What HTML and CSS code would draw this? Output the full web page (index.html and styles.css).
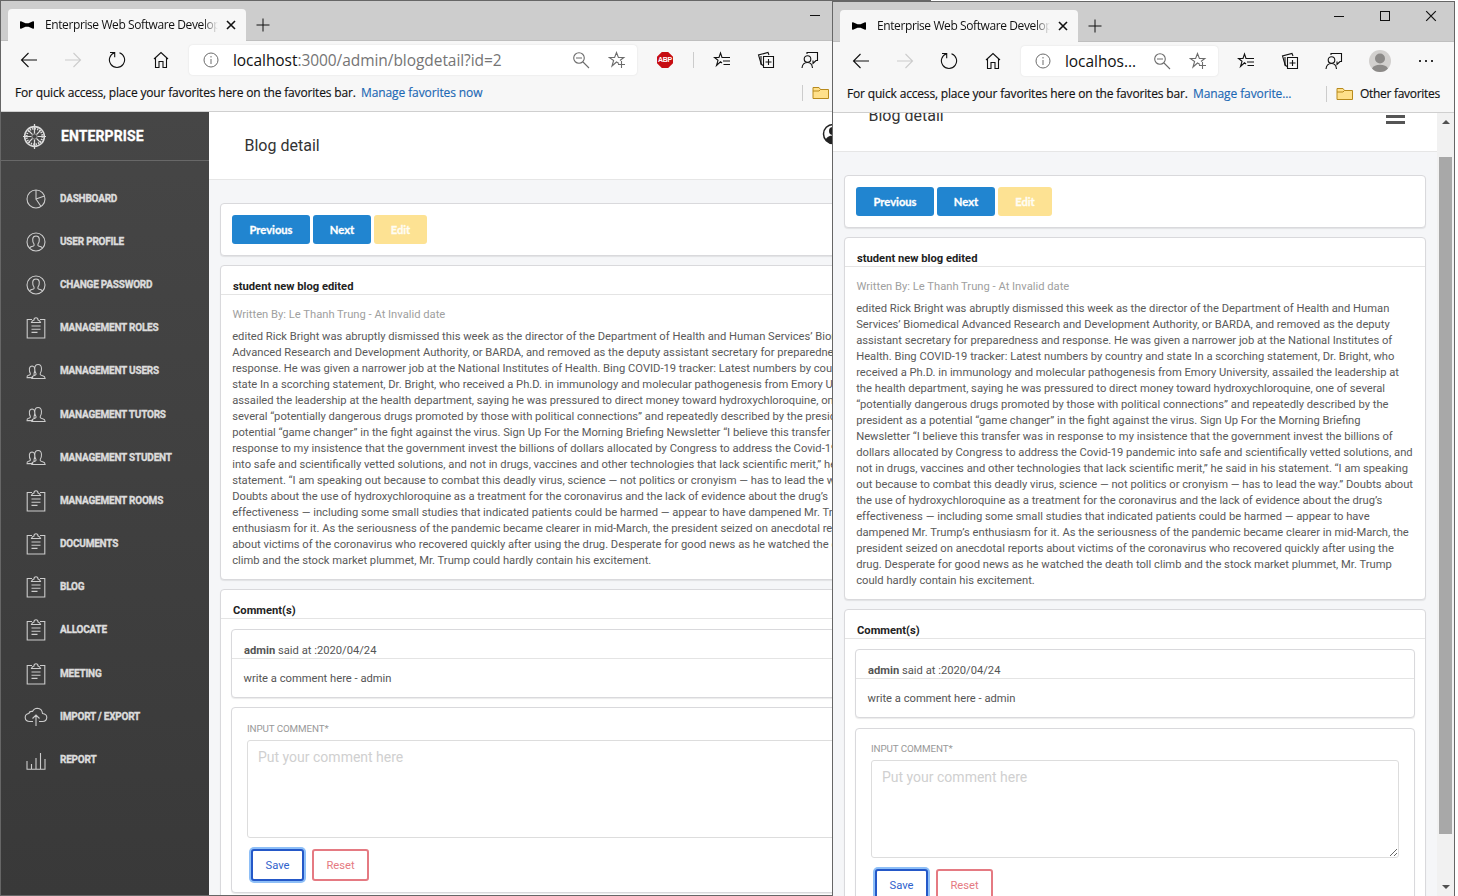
FILE: index.html
```html
<!DOCTYPE html>
<html lang="en">
<head>
<meta charset="utf-8">
<title>Enterprise Web Software Development</title>
<link rel="stylesheet" href="styles.css">
</head>
<body>
<svg class="defs" width="0" height="0">
  <symbol id="bow" viewBox="0 0 14 8"><path d="M0 1Q0 0 1 .3L5.5 2.2H8.500L13 .3Q14 0 14 1V7Q14 8 13 7.700L8.500 5.800H5.500L1 7.700Q0 8 0 7Z" fill="#000"/></symbol>
  <symbol id="x" viewBox="0 0 10 10"><path d="M1 1L9 9M9 1L1 9"/></symbol>
  <symbol id="plus" viewBox="0 0 14 14"><path d="M7 .5V13.500M.5 7H13.500"/></symbol>
  <symbol id="back" viewBox="0 0 18 18"><path d="M17 9H1.500M8.500 2L1.500 9L8.500 16"/></symbol>
  <symbol id="fwd" viewBox="0 0 18 18"><path d="M1 9H16.500M9.500 2L16.500 9L9.500 16"/></symbol>
  <symbol id="reload" viewBox="0 0 18 18"><path d="M6.500 1.700A7.600 7.600 0 1 0 11.500 1.700M2 1.500H6.700V6.200"/></symbol>
  <symbol id="home" viewBox="0 0 18 18"><path d="M2 8L9 1.500L16 8M3.500 7V16.500H7V10.500H11V16.500H14.500V7"/></symbol>
  <symbol id="info" viewBox="0 0 16 16"><circle cx="8" cy="8" r="7"/><path d="M8 7V12M8 4V5.500"/></symbol>
  <symbol id="zoomout" viewBox="0 0 18 18"><circle cx="7" cy="7" r="5.300"/><path d="M4 7H10M11 11L17 17"/></symbol>
  <symbol id="star" viewBox="0 0 18 18"><path d="M11 12.500L8.500 11L4 15L5.600 9.500L1.200 6.500H6.600L8.500 1.500L10.400 6.500H15.800L12 9.500M13.500 10V17M10 13.500H17"/></symbol>
  <symbol id="favs" viewBox="0 0 18 18"><path d="M9 12L7.500 10.800L3.500 14.500L5 9.300L1.500 6.500H6L7.500 2L9 6.500H17M10 10H17M10.500 13.500H17"/></symbol>
  <symbol id="coll" viewBox="0 0 18 18"><path d="M6.500 5.500H16.500V16.500H6.500ZM11.500 8V14M8.500 11H14.500M4.500 14L1.500 4L11 1.500L12 4"/><path d="M4 5V13L6 14.500"/></symbol>
  <symbol id="feed" viewBox="0 0 18 18"><circle cx="6.500" cy="8" r="3.300"/><path d="M1 17Q1.500 11.500 6.500 11.500Q11 11.500 11.500 17M6 3V1.500H16.500V9.500H15L12 12.500V9.500"/></symbol>
  <symbol id="folder" viewBox="0 0 18 14"><path d="M1 12.500V1.500H7L8.500 3.500H16.500V12.500Z" fill="#ffe08a" stroke="#b88a1c"/><path d="M1 5H7L8.500 3.500" stroke="#b88a1c"/></symbol>
  <symbol id="pie" viewBox="0 0 20 20"><circle cx="10" cy="10" r="9"/><path d="M10 1V10L18.500 7M10 10L15 17.500"/></symbol>
  <symbol id="user" viewBox="0 0 20 20"><circle cx="10" cy="10" r="9"/><path d="M3.500 16Q4.500 14.500 7.500 14Q8.500 13.500 8 12Q6.500 10 6.700 7Q7 4 10 4Q13 4 13.300 7Q13.500 10 12 12Q11.500 13.500 12.500 14Q15.500 14.500 16.500 16"/></symbol>
  <symbol id="clip" viewBox="0 0 20 22"><path d="M6 2.500H1.200V21H18.800V2.500H14M5.500 5.500Q6 3.500 8 3Q8 .8 10 .8Q12 .8 12 3Q14 3.500 14.500 5.500ZM5.500 9H14.500M5.500 12.200H14.500M5.500 15.400H11.500"/></symbol>
  <symbol id="users" viewBox="0 0 22 18"><path d="M8 15.500H1.500Q1.200 13.300 3 13Q5.500 12.500 5 11Q3.800 9 4 6Q4.500 3.200 7 3.200Q8.500 3.300 9.200 4.500Q10.500 8 9 11Q8.500 12.500 9.500 13M6.500 16.500Q6.500 14 8.500 13.500Q11.500 13 11 11.200Q9.500 9 9.700 5.500Q10 1.500 13.200 1.500Q16.500 1.500 16.800 5.500Q17 9 15.500 11.200Q15 13 18 13.500Q20.500 14 20.700 16.500Z"/></symbol>
  <symbol id="cloud" viewBox="0 0 24 20"><path d="M9 14.500H6Q1.200 14.500 1.200 10.500Q1.200 7 4.800 6.500Q5.500 4 8.500 4.500Q10 1.200 13.300 1.200Q18 1.500 18.500 6.500Q22.800 7 22.800 10.500Q22.500 14.500 18.500 14.500H15M12 19V8.500M8.500 11.500L12 8L15.500 11.500"/></symbol>
  <symbol id="chart" viewBox="0 0 20 18"><path d="M1 9V17.200H19V7M5.500 17V12M10 17V6M14.500 17V1"/></symbol>
  <symbol id="compass" viewBox="0 0 24 26"><circle cx="12" cy="13" r="10.300" stroke-width="1.600"/><circle cx="12" cy="13" r="8.200" stroke-width="2" stroke-dasharray="1.300 1.270"/><path d="M12 0V10M12 16V26M0 13H9M15 13H24M5.500 6.500L10 11M14 15L18.500 19.500M18.500 6.500L14 11M10 15L5.500 19.500" stroke-width="1.300"/><circle cx="12" cy="13" r="2.700" stroke="#999"/></symbol>
</svg>

<section class="window window--rear">
  <div class="tabstrip">
    <div class="tab"><svg class="tab-icon"><use href="#bow"/></svg><span class="tab-title">Enterprise Web Software Develop</span><svg class="tab-close"><use href="#x"/></svg></div>
    <svg class="tab-new"><use href="#plus"/></svg>
    <div class="captions"><span><i class="cap-min"></i></span><span></span><span></span></div>
  </div>
  <div class="toolbar">
    <div class="nav"><span><svg class="i18"><use href="#back"/></svg></span><span class="dim"><svg class="i18"><use href="#fwd"/></svg></span><span><svg class="i18"><use href="#reload"/></svg></span><span><svg class="i18"><use href="#home"/></svg></span></div>
    <div class="address"><svg class="i16"><use href="#info"/></svg><span class="url"><b>localhost</b>:3000/admin/blogdetail?id=2</span><svg class="i18 zoomout"><use href="#zoomout"/></svg><svg class="i18"><use href="#star"/></svg></div>
    <div class="extension"><span class="abp">ABP</span><i class="sep"></i></div>
    <div class="actions"><svg class="i18"><use href="#favs"/></svg><svg class="i18"><use href="#coll"/></svg><svg class="i18"><use href="#feed"/></svg></div>
  </div>
  <div class="favbar"><span class="fav-text">For quick access, place your favorites here on the favorites bar.</span><a class="fav-link">Manage favorites now</a><div class="other"><i class="sep"></i><svg class="folder"><use href="#folder"/></svg></div></div>
  <div class="viewport">
    <aside class="sidebar">
      <div class="brand"><svg class="logo"><use href="#compass"/></svg>ENTERPRISE</div>
      <nav class="menu">
        <a><svg><use href="#pie"/></svg><span>DASHBOARD</span></a>
        <a><svg><use href="#user"/></svg><span>USER PROFILE</span></a>
        <a><svg><use href="#user"/></svg><span>CHANGE PASSWORD</span></a>
        <a><svg class="tall"><use href="#clip"/></svg><span>MANAGEMENT ROLES</span></a>
        <a><svg class="people"><use href="#users"/></svg><span>MANAGEMENT USERS</span></a>
        <a><svg class="people"><use href="#users"/></svg><span>MANAGEMENT TUTORS</span></a>
        <a><svg class="people"><use href="#users"/></svg><span>MANAGEMENT STUDENT</span></a>
        <a><svg class="tall"><use href="#clip"/></svg><span>MANAGEMENT ROOMS</span></a>
        <a><svg class="tall"><use href="#clip"/></svg><span>DOCUMENTS</span></a>
        <a><svg class="tall"><use href="#clip"/></svg><span>BLOG</span></a>
        <a><svg class="tall"><use href="#clip"/></svg><span>ALLOCATE</span></a>
        <a><svg class="tall"><use href="#clip"/></svg><span>MEETING</span></a>
        <a><svg><use href="#cloud"/></svg><span>IMPORT / EXPORT</span></a>
        <a><svg class="low"><use href="#chart"/></svg><span>REPORT</span></a>
      </nav>
    </aside>
    <main class="main">
      <header class="page-head"><h1>Blog detail</h1><svg class="account" viewBox="0 0 22 22"><circle cx="11" cy="11" r="9.500" fill="#fff" stroke="#222" stroke-width="1.500"/><circle cx="11" cy="8" r="4" fill="#222"/><path d="M3.500 17Q5 12.500 11 12.500Q17 12.500 18.500 17Q15 20.500 11 20.500Q7 20.500 3.500 17Z" fill="#222"/></svg></header>
      <div class="content">
        <div class="card pager"><button class="btn prev">Previous</button><button class="btn next">Next</button><button class="btn edit">Edit</button></div>
        <article class="card post">
          <h2>student new blog edited</h2>
          <p class="byline">Written By: Le Thanh Trung - At Invalid date</p>
          <p class="text">edited Rick Bright was abruptly dismissed this week as the director of the Department of Health and Human Services’ Biomedical<br>Advanced Research and Development Authority, or BARDA, and removed as the deputy assistant secretary for preparedness and<br>response. He was given a narrower job at the National Institutes of Health. Bing COVID-19 tracker: Latest numbers by country and<br>state In a scorching statement, Dr. Bright, who received a Ph.D. in immunology and molecular pathogenesis from Emory University,<br>assailed the leadership at the health department, saying he was pressured to direct money toward hydroxychloroquine, one of<br>several “potentially dangerous drugs promoted by those with political connections” and repeatedly described by the president as a<br>potential “game changer” in the fight against the virus. Sign Up For the Morning Briefing Newsletter “I believe this transfer was in<br>response to my insistence that the government invest the billions of dollars allocated by Congress to address the Covid-19 pandemic<br>into safe and scientifically vetted solutions, and not in drugs, vaccines and other technologies that lack scientific merit,” he said in his<br>statement. “I am speaking out because to combat this deadly virus, science — not politics or cronyism — has to lead the way.”<br>Doubts about the use of hydroxychloroquine as a treatment for the coronavirus and the lack of evidence about the drug’s<br>effectiveness — including some small studies that indicated patients could be harmed — appear to have dampened Mr. Trump’s<br>enthusiasm for it. As the seriousness of the pandemic became clearer in mid-March, the president seized on anecdotal reports<br>about victims of the coronavirus who recovered quickly after using the drug. Desperate for good news as he watched the death toll<br>climb and the stock market plummet, Mr. Trump could hardly contain his excitement.</p>
        </article>
        <section class="card comments">
          <h2>Comment(s)</h2>
          <div class="card comment"><h3><b>admin</b> said at :2020/04/24</h3><p>write a comment here - admin</p></div>
          <form class="card form"><label>INPUT COMMENT*</label><textarea placeholder="Put your comment here"></textarea><div class="buttons"><button type="button" class="save">Save</button><button type="button" class="reset">Reset</button></div></form>
        </section>
      </div>
    </main>
  </div>
</section>

<section class="window window--front">
  <div class="tabstrip">
    <div class="tab"><svg class="tab-icon"><use href="#bow"/></svg><span class="tab-title">Enterprise Web Software Develop</span><svg class="tab-close"><use href="#x"/></svg></div>
    <svg class="tab-new"><use href="#plus"/></svg>
    <div class="captions"><span><i class="cap-min"></i></span><span><i class="cap-max"></i></span><span><svg class="cap-x"><use href="#x"/></svg></span></div>
  </div>
  <div class="toolbar">
    <div class="nav"><span><svg class="i18"><use href="#back"/></svg></span><span class="dim"><svg class="i18"><use href="#fwd"/></svg></span><span><svg class="i18"><use href="#reload"/></svg></span><span><svg class="i18"><use href="#home"/></svg></span></div>
    <div class="address"><svg class="i16"><use href="#info"/></svg><span class="url"><b>localhos...</b></span><svg class="i18 zoomout"><use href="#zoomout"/></svg><svg class="i18"><use href="#star"/></svg></div>
    <div class="actions"><svg class="i18"><use href="#favs"/></svg><svg class="i18"><use href="#coll"/></svg><svg class="i18"><use href="#feed"/></svg><svg class="profile" viewBox="0 0 22 22"><circle cx="11" cy="11" r="11" fill="#d2d0ce"/><circle cx="11" cy="8.500" r="5" fill="#8c8a88"/><path d="M3 18.500Q5 14.800 11 14.800Q17 14.800 19 18.500Q16 22 11 22Q6 22 3 18.500Z" fill="#8c8a88"/></svg><span class="dots"><i></i><i></i><i></i></span></div>
  </div>
  <div class="favbar"><span class="fav-text">For quick access, place your favorites here on the favorites bar.</span><a class="fav-link">Manage favorite...</a><div class="other"><i class="sep"></i><svg class="folder"><use href="#folder"/></svg><span class="other-text">Other favorites</span></div></div>
  <div class="viewport">
    <main class="main scrolled">
      <header class="page-head"><h1>Blog detail</h1><span class="burger"><i></i><i></i><i></i></span></header>
      <div class="content">
        <div class="card pager"><button class="btn prev">Previous</button><button class="btn next">Next</button><button class="btn edit">Edit</button></div>
        <article class="card post">
          <h2>student new blog edited</h2>
          <p class="byline">Written By: Le Thanh Trung - At Invalid date</p>
          <p class="text">edited Rick Bright was abruptly dismissed this week as the director of the Department of Health and Human<br>Services’ Biomedical Advanced Research and Development Authority, or BARDA, and removed as the deputy<br>assistant secretary for preparedness and response. He was given a narrower job at the National Institutes of<br>Health. Bing COVID-19 tracker: Latest numbers by country and state In a scorching statement, Dr. Bright, who<br>received a Ph.D. in immunology and molecular pathogenesis from Emory University, assailed the leadership at<br>the health department, saying he was pressured to direct money toward hydroxychloroquine, one of several<br>“potentially dangerous drugs promoted by those with political connections” and repeatedly described by the<br>president as a potential “game changer” in the fight against the virus. Sign Up For the Morning Briefing<br>Newsletter “I believe this transfer was in response to my insistence that the government invest the billions of<br>dollars allocated by Congress to address the Covid-19 pandemic into safe and scientifically vetted solutions, and<br>not in drugs, vaccines and other technologies that lack scientific merit,” he said in his statement. “I am speaking<br>out because to combat this deadly virus, science — not politics or cronyism — has to lead the way.” Doubts about<br>the use of hydroxychloroquine as a treatment for the coronavirus and the lack of evidence about the drug’s<br>effectiveness — including some small studies that indicated patients could be harmed — appear to have<br>dampened Mr. Trump’s enthusiasm for it. As the seriousness of the pandemic became clearer in mid-March, the<br>president seized on anecdotal reports about victims of the coronavirus who recovered quickly after using the<br>drug. Desperate for good news as he watched the death toll climb and the stock market plummet, Mr. Trump<br>could hardly contain his excitement.</p>
        </article>
        <section class="card comments">
          <h2>Comment(s)</h2>
          <div class="card comment"><h3><b>admin</b> said at :2020/04/24</h3><p>write a comment here - admin</p></div>
          <form class="card form"><label>INPUT COMMENT*</label><textarea placeholder="Put your comment here"></textarea><div class="buttons"><button type="button" class="save">Save</button><button type="button" class="reset">Reset</button></div></form>
        </section>
      </div>
    </main>
    <div class="scrollbar"><i class="up"></i><div class="thumb"></div><i class="down"></i></div>
  </div>
</section>
</body>
</html>
```
FILE: styles.css
```css
* { box-sizing: border-box; }
body { margin: 0; height: 896px; overflow: hidden; position: relative; background: #fff; font-family: Roboto, "Liberation Sans", sans-serif; }
h1, h2, h3, p { margin: 0; font-weight: 400; }
svg { fill: none; stroke: currentColor; flex: none; display: block; }
.defs { position: absolute; }

.window { position: absolute; display: flex; flex-direction: column; overflow: hidden; border: 1px solid #666; background: #f7f7f7; color: #111; }
.window--rear { left: 0; top: 0; width: 931px; height: 896px; }
.window--front { left: 832px; top: 1px; width: 623px; height: 916px; }

.tabstrip { flex: none; height: 40px; background: #cdcdcd; display: flex; align-items: flex-end; padding-left: 7px; font-family: "Open Sans", "Noto Sans", sans-serif; box-shadow: inset 0 -1px #bfbfbf; }
.tab { width: 238px; height: 32px; background: #f7f7f7; border-radius: 4px 4px 0 0; display: flex; align-items: center; padding-left: 12px; }
.tab-icon { width: 14px; height: 8px; stroke: none; }
.tab-title { width: 173px; margin-left: 11px; font-size: 12px; line-height: 18px; white-space: nowrap; overflow: hidden; letter-spacing: -.4px; -webkit-mask-image: linear-gradient(90deg, #000 158px, transparent 173px); mask-image: linear-gradient(90deg, #000 158px, transparent 173px); }
.tab-close { width: 10px; height: 10px; margin-left: 8px; stroke-width: 1.600; }
.tab-new { width: 14px; height: 14px; margin: 0 0 9px 10px; }
.captions { margin-left: auto; align-self: flex-start; display: flex; height: 28px; }
.captions span { width: 46px; display: flex; align-items: center; justify-content: center; }
.cap-min { width: 10px; height: 1px; background: #111; }
.cap-max { width: 10px; height: 10px; border: 1px solid #111; }
.cap-x { width: 12px; height: 12px; }

.toolbar { flex: none; height: 38px; display: flex; align-items: center; }
.nav { display: flex; padding-left: 6px; width: 188px; }
.nav span { width: 44px; display: flex; justify-content: center; }
.nav .dim { color: #ccc; }
.i18 { width: 18px; height: 18px; stroke-width: 1.100; }
.i16 { width: 16px; height: 16px; }
.address { flex: 1; height: 30px; background: #fff; border-radius: 4px; box-shadow: 0 0 2px #ddd; display: flex; align-items: center; padding: 0 11px 0 14px; color: #6c6c6c; }
.url { flex: 1; margin-left: 14px; font: 15.500px/22px "Open Sans", "Noto Sans", sans-serif; color: #757575; white-space: nowrap; letter-spacing: -.06px; }
.url b { font-weight: 400; color: #111; }
.zoomout { margin-right: 18px; }
.extension { width: 57px; flex: none; display: flex; align-items: center; padding-left: 20px; }
.abp { width: 16px; height: 16px; background: #c70d12; color: #fff; font: 700 7px/16px "Liberation Sans", sans-serif; text-align: center; clip-path: polygon(30% 0, 70% 0, 100% 30%, 100% 70%, 70% 100%, 30% 100%, 0 70%, 0 30%); letter-spacing: -.2px; }
.sep { width: 1px; height: 16px; background: #ccc; flex: none; }
.extension .sep { margin-left: 20px; }
.actions { width: 236px; flex: none; display: flex; align-items: center; padding-left: 19px; gap: 26px; }
.profile { width: 22px; height: 22px; stroke: none; }
.dots { display: flex; gap: 4px; margin-left: 2px; }
.dots i { width: 2px; height: 2px; background: #333; }

.favbar { flex: none; height: 33px; border-bottom: 1px solid #cfcfcf; display: flex; align-items: center; padding: 0 14px 4px; font: 12px/16px "Open Sans", "Noto Sans", sans-serif; white-space: nowrap; -webkit-text-stroke: .15px currentColor; }
.fav-text { width: 346px; flex: none; letter-spacing: -.17px; }
.fav-link { color: #1c68b4; letter-spacing: -.1px; }
.other { margin-left: auto; display: flex; flex: none; align-items: center; width: 114px; }
.folder { width: 18px; height: 14px; margin-left: 9px; }
.other-text { margin-left: 6px; letter-spacing: -.3px; }

.viewport { flex: 1; min-height: 0; display: flex; overflow: hidden; background: #f5f6f8; }
.sidebar { width: 208px; flex: none; background: linear-gradient(#464646, #393939); color: #dcdcdc; }
.brand { height: 49px; border-bottom: 1px solid #686868; display: flex; align-items: center; padding-left: 22px; gap: 14px; font-size: 14px; font-weight: 700; color: #fff; letter-spacing: .1px; -webkit-text-stroke: .3px currentColor; }
.logo { width: 23px; height: 25px; margin-right: 1px; color: #ddd; }
.menu { padding-top: 15.500px; }
.menu a { height: 43.200px; display: flex; align-items: center; padding-left: 22px; }
.menu svg { width: 26px; height: 20px; margin-top: 1px; stroke-width: 1.100; color: #ccc; }
.menu svg.tall { height: 22px; }
.menu svg.people { height: 17px; }
.menu svg.low { height: 18px; margin-top: 3px; }
.menu span { margin-left: 11px; font-size: 10px; font-weight: 700; white-space: nowrap; letter-spacing: -.22px; -webkit-text-stroke: .35px currentColor; }

.main { flex: 1; min-width: 0; background: #f5f6f8; }
.scrolled { margin-top: -29px; }
.page-head { height: 68px; background: #fff; border-bottom: 1px solid #e6e6e6; display: flex; align-items: center; justify-content: space-between; padding-left: 35.500px; }
.page-head h1 { font-size: 16px; line-height: 20px; color: #333; }
.window--front h1 { padding-bottom: 4px; }
.account { width: 22px; height: 22px; margin: 0 86px 23px 0; stroke: none; }
.burger { display: grid; gap: 3px; margin: 0 32px 2px 0; }
.burger i { width: 19px; height: 3px; background: #555; }
.content { padding: 23px 11px 0; }
.window--front .content { padding-top: 23px; }
.card { background: #fff; border: 1px solid #d9d9dc; border-radius: 4px; box-shadow: 0 1px 1px rgba(0,0,0,.08); }
.pager { height: 53px; padding: 11px; display: flex; gap: 3px; margin-bottom: 9px; }
.btn { height: 29px; border: 0; border-radius: 3px; padding: 0; background: #2185d0; color: #fff; font: 700 11.200px/29px Lato, sans-serif; -webkit-text-stroke: .3px currentColor; }
.prev { width: 78px; }
.next { width: 58px; }
.edit { width: 53px; background: #fde293; color: #fffdf4; }
.window--front .edit { width: 54px; }
.post { padding-bottom: 10px; margin-bottom: 9px; }
.card h2 { height: 29px; padding: 13px 12px 0; border-bottom: 1px solid #e4e4e4; font-size: 11.200px; line-height: 15px; font-weight: 700; color: #222; }
.byline { padding: 12px 11.500px 6px; font-size: 11.200px; line-height: 16px; color: #a0a0a0; }
.text { padding-left: 11.200px; font-size: 11.200px; line-height: 16px; color: #5a5a5a; white-space: nowrap; }
.comments { height: 330px; }
.comment { margin: 10px 10px 9px; height: 69px; font-size: 11.200px; color: #555; }
.window--front .comment { margin-bottom: 10px; }
.comment h3 { height: 29px; padding: 13px 12px 0; border-bottom: 1px solid #e4e4e4; font-size: 11.200px; line-height: 15px; }
.comment p { padding: 12px 11.500px 0; line-height: 16px; }
.form { display: block; margin: 0 10px; height: 186px; padding: 14px 15px 0; }
.window--front .form { padding-top: 13px; }
.form label { display: block; height: 18px; font-size: 9.800px; line-height: 14px; color: #999; letter-spacing: -.1px; }
textarea { display: block; width: 100%; height: 98px; padding: 8px 10px; border: 1px solid #ddd; border-radius: 3px; font: 14px/16px Roboto, sans-serif; background: #fff; }
textarea::placeholder { color: #d0d0d0; }
.buttons { display: flex; gap: 8px; padding: 11px 0 0 4px; }
.buttons button { height: 32px; background: #fff; border-radius: 3px; padding: 1px 0 0; font: 11.200px/16px Roboto, sans-serif; }
.save { width: 53px; border: 2px solid #2458c8; color: #2f62cc; box-shadow: 0 0 0 2px #8ebff7; }
.reset { width: 57px; border: 2px solid #e57a82; color: #e57a82; }

.scrollbar { width: 17px; flex: none; background: #f1f1f1; display: flex; flex-direction: column; align-items: center; padding-top: 7px; }
.scrollbar i { border: 4px solid transparent; width: 0; height: 0; }
.up { border-bottom-color: #505050 !important; border-top-width: 0 !important; margin-bottom: 33px; }
.down { border-top-color: #505050 !important; border-bottom-width: 0 !important; margin-top: 51px; }
.thumb { width: 13px; height: 677px; background: #a8a8a8; }
```
